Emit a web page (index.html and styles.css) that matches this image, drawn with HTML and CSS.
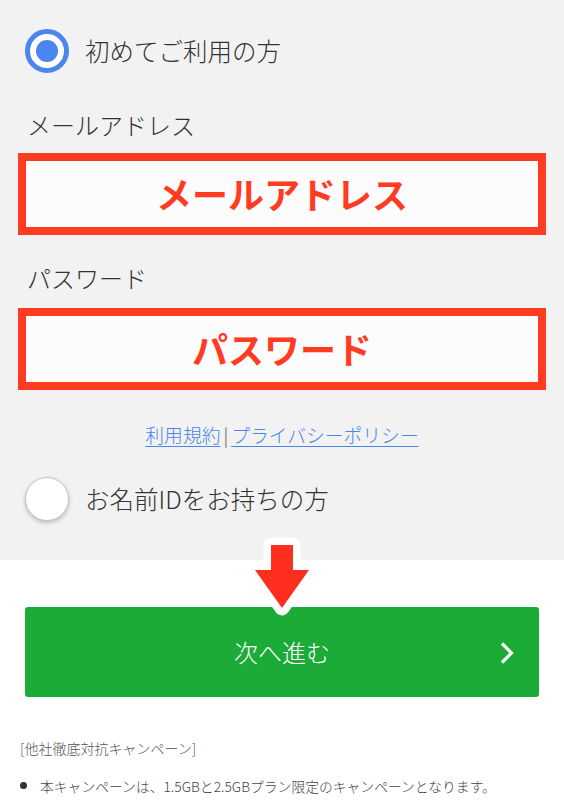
FILE: index.html
```html
<!DOCTYPE html>
<html lang="ja">
<head>
<meta charset="utf-8">
<link rel="stylesheet" href="styles.css">
</head>
<body>
<div class="page">
  <section class="form">
    <div class="radio-row">
      <span class="radio radio-on"><span class="dot"></span></span>
      <span class="radio-label">初めてご利用の方</span>
    </div>
    <div class="label label-mail">メールアドレス</div>
    <div class="field">メールアドレス</div>
    <div class="label label-pass">パスワード</div>
    <div class="field">パスワード</div>
    <div class="links"><a href="#">利用規約</a><span class="sep">|</span><a href="#">プライバシーポリシー</a></div>
    <div class="radio-row radio-row-2">
      <span class="radio radio-off"></span>
      <span class="radio-label">お名前IDをお持ちの方</span>
    </div>
  </section>
  <section class="action">
    <button class="next">次へ進む<svg class="chev" width="14" height="22" viewBox="0 0 14 22"><path d="M2 1.5 L11.5 11 L2 20.5" fill="none" stroke="#fff" stroke-width="3.2"/></svg></button>
    <svg class="arrow" width="70" height="92" viewBox="0 0 70 92"><path d="M24 13 H46 V38 H62 L35 76 L8 38 H24 Z" fill="#ff2e1f" stroke="#fff" stroke-width="15" stroke-linejoin="round" paint-order="stroke"/></svg>
  </section>
  <section class="notes">
    <p class="note-title">[他社徹底対抗キャンペーン]</p>
    <ul class="note-list">
      <li>本キャンペーンは、1.5GBと2.5GBプラン限定のキャンペーンとなります。</li>
    </ul>
  </section>
</div>
</body>
</html>
```

FILE: styles.css
```css
* { box-sizing: border-box; }
html, body { margin: 0; padding: 0; background: #fff; }
body {
  font-family: "Noto Sans CJK JP", "Noto Sans", sans-serif;
  font-weight: 300;
  color: #333;
  width: 564px;
  overflow: hidden;
}
.page { position: relative; }

.form {
  background: #f2f2f2;
  padding: 29px 18px 39px 18px;
  display: flex;
  flex-direction: column;
}
.radio-row {
  display: flex;
  align-items: center;
  height: 44px;
  padding-left: 7px;
}
.radio {
  width: 44px;
  height: 44px;
  border-radius: 50%;
  flex: none;
  display: flex;
  align-items: center;
  justify-content: center;
}
.radio-on {
  background: #fff;
  border: 5px solid #4a86ee;
}
.radio-on .dot {
  width: 22px;
  height: 22px;
  border-radius: 50%;
  background: #4a86ee;
}
.radio-off {
  background: #fff;
  border: 1px solid #c4c4c4;
  box-shadow: 0 2px 4px rgba(0,0,0,0.22);
}
.radio-label {
  font-size: 24.5px;
  line-height: 34px;
  margin-left: 16px;
  color: #333;
}
.label {
  font-size: 24px;
  line-height: 34px;
  padding-left: 9px;
  color: #333;
}
.label-mail { margin-top: 35px; }
.label-pass { margin-top: 26px; }
.field {
  margin-top: 11px;
  height: 82px;
  border: 8px solid #ff3b21;
  background: #fcfcfc;
  display: flex;
  align-items: center;
  justify-content: center;
  color: #ff3b21;
  font-weight: 700;
  font-size: 36px;
  line-height: 1;
  padding-bottom: 2px;
}
.label-pass + .field { margin-top: 13px; }
.links {
  margin-top: 32px;
  text-align: center;
  font-size: 18.8px;
  line-height: 26px;
}
.links a {
  color: #4a86e8;
  text-decoration: underline;
  text-underline-offset: 3px;
}
.sep {
  color: #555;
  margin: 0 3px;
}
.radio-row-2 { margin-top: 29px; }

.action {
  position: relative;
  padding: 47px 25px 0 25px;
}
.next {
  width: 514px;
  height: 90px;
  border: none;
  border-radius: 3px;
  background: #1dab37;
  color: #fff;
  font-family: inherit;
  font-weight: 300;
  font-size: 24px;
  display: flex;
  align-items: center;
  justify-content: center;
  position: relative;
  padding: 0 0 2px 0;
}
.chev {
  position: absolute;
  right: 25px;
  top: 35px;
}
.arrow {
  position: absolute;
  left: 247px;
  top: -28px;
}

.notes {
  padding: 41px 20px 0 20px;
}
.note-title {
  margin: 0;
  font-size: 14px;
  line-height: 20px;
  color: #555;
}
.note-list {
  margin: 17px 0 0 0;
  padding: 0 0 0 20px;
  font-size: 13.8px;
  line-height: 20px;
  color: #444;
}
.note-list li::marker { font-size: 17px; color: #333; }
```
